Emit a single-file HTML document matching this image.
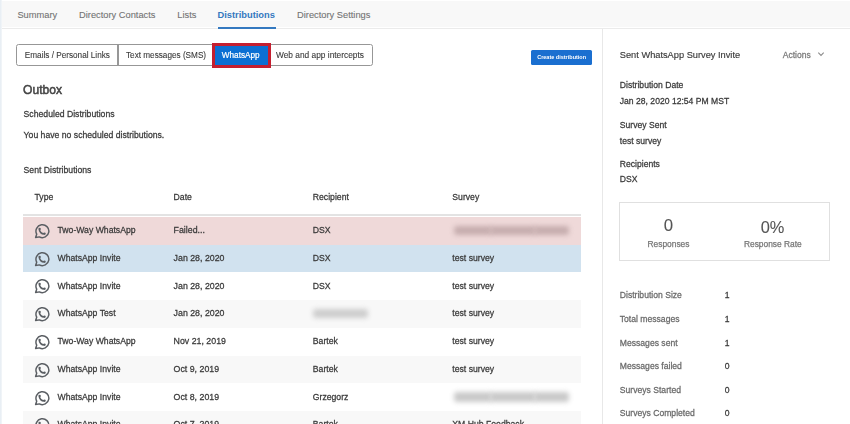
<!DOCTYPE html>
<html><head><meta charset="utf-8"><style>
html,body{margin:0;padding:0;}
body{width:850px;height:424px;overflow:hidden;position:relative;background:#fff;font-family:"Liberation Sans",sans-serif;}
.t{position:absolute;white-space:nowrap;transform-origin:0 84.65%;transform:scaleY(1.13);}
.r{position:absolute;}
.ic{position:absolute;}
#w{position:absolute;left:0;top:0;width:850px;height:424px;overflow:hidden;filter:blur(0.35px);}
</style></head><body><div id="w">
<div class="r" style="left:0px;top:0px;width:2px;height:424px;background:linear-gradient(90deg,#e6edf3,#f3f6f9);"></div>
<div class="r" style="left:2px;top:1.2px;width:848px;height:26.3px;background:#f8f8f8;"></div>
<div class="r" style="left:2px;top:27.5px;width:848px;height:1.3px;background:#ebebeb;"></div>
<div class="t" style="left:17.40px;top:10.83px;font-size:9.3px;line-height:9.3px;color:#737373;-webkit-text-stroke:0.1px #737373;transform:scaleY(1.06);">Summary</div>
<div class="t" style="left:79.00px;top:10.83px;font-size:9.3px;line-height:9.3px;color:#737373;-webkit-text-stroke:0.1px #737373;transform:scaleY(1.06);">Directory Contacts</div>
<div class="t" style="left:177.30px;top:10.83px;font-size:9.3px;line-height:9.3px;color:#737373;-webkit-text-stroke:0.1px #737373;transform:scaleY(1.06);">Lists</div>
<div class="t" style="left:217.50px;top:10.81px;font-size:9.32px;line-height:9.32px;color:#3479c0;font-weight:700;transform:scaleY(1.06);">Distributions</div>
<div class="r" style="left:218px;top:27px;width:57.5px;height:2px;background:#3479c0;"></div>
<div class="t" style="left:297.00px;top:10.83px;font-size:9.3px;line-height:9.3px;color:#737373;-webkit-text-stroke:0.1px #737373;transform:scaleY(1.06);">Directory Settings</div>
<div class="r" style="left:16px;top:44.3px;width:356.8px;height:21.8px;border:1.5px solid #979797;border-radius:2.5px;box-sizing:border-box;background:#fff"></div>
<div class="r" style="left:117.4px;top:45px;width:1.3px;height:21px;background:#979797;"></div>
<div class="t" style="left:24.80px;top:51.56px;font-size:8.2px;line-height:8.2px;color:#3a3a3a;-webkit-text-stroke:0.1px #3a3a3a;">Emails / Personal Links</div>
<div class="t" style="left:126.00px;top:51.56px;font-size:8.2px;line-height:8.2px;color:#3a3a3a;-webkit-text-stroke:0.1px #3a3a3a;">Text messages (SMS)</div>
<div class="r" style="left:212.2px;top:43px;width:58.6px;height:24.7px;background:#0b6fd3;border:3px solid #c41f30;box-sizing:border-box"></div>
<div class="t" style="left:221.80px;top:51.56px;font-size:8.2px;line-height:8.2px;color:#fff;-webkit-text-stroke:0.2px #fff;">WhatsApp</div>
<div class="t" style="left:276.00px;top:51.43px;font-size:8.35px;line-height:8.35px;color:#3a3a3a;-webkit-text-stroke:0.1px #3a3a3a;">Web and app intercepts</div>
<div class="r" style="left:531px;top:49.5px;width:61px;height:15.5px;background:#1a6fd0;border-radius:1.5px"></div>
<div class="t" style="left:537.20px;top:55.04px;font-size:5.5px;line-height:5.5px;color:#fff;font-weight:700;">Create distribution</div>
<div class="t" style="left:23.10px;top:84.46px;font-size:12.1px;line-height:12.1px;color:#444;-webkit-text-stroke:0.5px #444;">Outbox</div>
<div class="t" style="left:23.60px;top:109.67px;font-size:8.66px;line-height:8.66px;color:#3a3a3a;-webkit-text-stroke:0.25px #3a3a3a;">Scheduled Distributions</div>
<div class="t" style="left:23.60px;top:131.37px;font-size:8.66px;line-height:8.66px;color:#3a3a3a;-webkit-text-stroke:0.25px #3a3a3a;">You have no scheduled distributions.</div>
<div class="t" style="left:23.60px;top:166.27px;font-size:8.66px;line-height:8.66px;color:#3a3a3a;-webkit-text-stroke:0.25px #3a3a3a;">Sent Distributions</div>
<div class="t" style="left:34.50px;top:193.27px;font-size:8.66px;line-height:8.66px;color:#3a3a3a;-webkit-text-stroke:0.25px #3a3a3a;">Type</div>
<div class="t" style="left:173.60px;top:193.27px;font-size:8.66px;line-height:8.66px;color:#3a3a3a;-webkit-text-stroke:0.25px #3a3a3a;">Date</div>
<div class="t" style="left:312.80px;top:193.27px;font-size:8.66px;line-height:8.66px;color:#3a3a3a;-webkit-text-stroke:0.25px #3a3a3a;">Recipient</div>
<div class="t" style="left:452.30px;top:193.27px;font-size:8.66px;line-height:8.66px;color:#3a3a3a;-webkit-text-stroke:0.25px #3a3a3a;">Survey</div>
<div class="r" style="left:23.2px;top:214px;width:558px;height:2.2px;background:#e3e3e3;"></div>
<div class="r" style="left:23.2px;top:216.85px;width:558px;height:27.76px;background:#efd9d9;"></div>
<svg class="ic" style="left:34.1px;top:222.95px" width="16" height="16" viewBox="0 0 16 16"><path d="M2.7 11.2 L1.6 14.5 L5.4 13.9 A6.45 6.45 0 1 0 2.7 11.2 Z" fill="none" stroke="#5a5e63" stroke-width="1.45" stroke-linejoin="round"/><path d="M5.4 5.9 C5.2 8.9 7.6 11.2 10.6 10.9" fill="none" stroke="#5a5e63" stroke-width="1.7" stroke-linecap="round"/><circle cx="5.7" cy="5.9" r="1.05" fill="#5a5e63"/><circle cx="10.6" cy="10.6" r="1.05" fill="#5a5e63"/></svg>
<div class="t" style="left:57.50px;top:226.12px;font-size:8.66px;line-height:8.66px;color:#3a3a3a;-webkit-text-stroke:0.25px #3a3a3a;">Two-Way WhatsApp</div>
<div class="t" style="left:173.60px;top:226.00px;font-size:8.8px;line-height:8.8px;color:#3a3a3a;-webkit-text-stroke:0.25px #3a3a3a;">Failed...</div>
<div class="t" style="left:312.80px;top:226.12px;font-size:8.66px;line-height:8.66px;color:#3a3a3a;-webkit-text-stroke:0.25px #3a3a3a;">DSX</div>
<div class="r" style="left:23.2px;top:244.61px;width:558px;height:27.76px;background:#d1e2ef;"></div>
<svg class="ic" style="left:34.1px;top:250.71px" width="16" height="16" viewBox="0 0 16 16"><path d="M2.7 11.2 L1.6 14.5 L5.4 13.9 A6.45 6.45 0 1 0 2.7 11.2 Z" fill="none" stroke="#5a5e63" stroke-width="1.45" stroke-linejoin="round"/><path d="M5.4 5.9 C5.2 8.9 7.6 11.2 10.6 10.9" fill="none" stroke="#5a5e63" stroke-width="1.7" stroke-linecap="round"/><circle cx="5.7" cy="5.9" r="1.05" fill="#5a5e63"/><circle cx="10.6" cy="10.6" r="1.05" fill="#5a5e63"/></svg>
<div class="t" style="left:57.50px;top:253.88px;font-size:8.66px;line-height:8.66px;color:#3a3a3a;-webkit-text-stroke:0.25px #3a3a3a;">WhatsApp Invite</div>
<div class="t" style="left:173.60px;top:253.76px;font-size:8.8px;line-height:8.8px;color:#3a3a3a;-webkit-text-stroke:0.25px #3a3a3a;">Jan 28, 2020</div>
<div class="t" style="left:312.80px;top:253.88px;font-size:8.66px;line-height:8.66px;color:#3a3a3a;-webkit-text-stroke:0.25px #3a3a3a;">DSX</div>
<div class="t" style="left:452.30px;top:253.88px;font-size:8.66px;line-height:8.66px;color:#3a3a3a;-webkit-text-stroke:0.25px #3a3a3a;">test survey</div>
<div class="r" style="left:23.2px;top:272.37px;width:558px;height:27.76px;background:#ffffff;"></div>
<svg class="ic" style="left:34.1px;top:278.47px" width="16" height="16" viewBox="0 0 16 16"><path d="M2.7 11.2 L1.6 14.5 L5.4 13.9 A6.45 6.45 0 1 0 2.7 11.2 Z" fill="none" stroke="#5a5e63" stroke-width="1.45" stroke-linejoin="round"/><path d="M5.4 5.9 C5.2 8.9 7.6 11.2 10.6 10.9" fill="none" stroke="#5a5e63" stroke-width="1.7" stroke-linecap="round"/><circle cx="5.7" cy="5.9" r="1.05" fill="#5a5e63"/><circle cx="10.6" cy="10.6" r="1.05" fill="#5a5e63"/></svg>
<div class="t" style="left:57.50px;top:281.64px;font-size:8.66px;line-height:8.66px;color:#3a3a3a;-webkit-text-stroke:0.25px #3a3a3a;">WhatsApp Invite</div>
<div class="t" style="left:173.60px;top:281.52px;font-size:8.8px;line-height:8.8px;color:#3a3a3a;-webkit-text-stroke:0.25px #3a3a3a;">Jan 28, 2020</div>
<div class="t" style="left:312.80px;top:281.64px;font-size:8.66px;line-height:8.66px;color:#3a3a3a;-webkit-text-stroke:0.25px #3a3a3a;">DSX</div>
<div class="t" style="left:452.30px;top:281.64px;font-size:8.66px;line-height:8.66px;color:#3a3a3a;-webkit-text-stroke:0.25px #3a3a3a;">test survey</div>
<div class="r" style="left:23.2px;top:300.13px;width:558px;height:27.76px;background:#f8f8f8;"></div>
<svg class="ic" style="left:34.1px;top:306.23px" width="16" height="16" viewBox="0 0 16 16"><path d="M2.7 11.2 L1.6 14.5 L5.4 13.9 A6.45 6.45 0 1 0 2.7 11.2 Z" fill="none" stroke="#5a5e63" stroke-width="1.45" stroke-linejoin="round"/><path d="M5.4 5.9 C5.2 8.9 7.6 11.2 10.6 10.9" fill="none" stroke="#5a5e63" stroke-width="1.7" stroke-linecap="round"/><circle cx="5.7" cy="5.9" r="1.05" fill="#5a5e63"/><circle cx="10.6" cy="10.6" r="1.05" fill="#5a5e63"/></svg>
<div class="t" style="left:57.50px;top:309.40px;font-size:8.66px;line-height:8.66px;color:#3a3a3a;-webkit-text-stroke:0.25px #3a3a3a;">WhatsApp Test</div>
<div class="t" style="left:173.60px;top:309.28px;font-size:8.8px;line-height:8.8px;color:#3a3a3a;-webkit-text-stroke:0.25px #3a3a3a;">Jan 28, 2020</div>
<div class="t" style="left:452.30px;top:309.40px;font-size:8.66px;line-height:8.66px;color:#3a3a3a;-webkit-text-stroke:0.25px #3a3a3a;">test survey</div>
<div class="r" style="left:23.2px;top:327.89px;width:558px;height:27.76px;background:#ffffff;"></div>
<svg class="ic" style="left:34.1px;top:333.99px" width="16" height="16" viewBox="0 0 16 16"><path d="M2.7 11.2 L1.6 14.5 L5.4 13.9 A6.45 6.45 0 1 0 2.7 11.2 Z" fill="none" stroke="#5a5e63" stroke-width="1.45" stroke-linejoin="round"/><path d="M5.4 5.9 C5.2 8.9 7.6 11.2 10.6 10.9" fill="none" stroke="#5a5e63" stroke-width="1.7" stroke-linecap="round"/><circle cx="5.7" cy="5.9" r="1.05" fill="#5a5e63"/><circle cx="10.6" cy="10.6" r="1.05" fill="#5a5e63"/></svg>
<div class="t" style="left:57.50px;top:337.16px;font-size:8.66px;line-height:8.66px;color:#3a3a3a;-webkit-text-stroke:0.25px #3a3a3a;">Two-Way WhatsApp</div>
<div class="t" style="left:173.60px;top:337.04px;font-size:8.8px;line-height:8.8px;color:#3a3a3a;-webkit-text-stroke:0.25px #3a3a3a;">Nov 21, 2019</div>
<div class="t" style="left:312.80px;top:337.16px;font-size:8.66px;line-height:8.66px;color:#3a3a3a;-webkit-text-stroke:0.25px #3a3a3a;">Bartek</div>
<div class="t" style="left:452.30px;top:337.16px;font-size:8.66px;line-height:8.66px;color:#3a3a3a;-webkit-text-stroke:0.25px #3a3a3a;">test survey</div>
<div class="r" style="left:23.2px;top:355.65px;width:558px;height:27.76px;background:#f8f8f8;"></div>
<svg class="ic" style="left:34.1px;top:361.75px" width="16" height="16" viewBox="0 0 16 16"><path d="M2.7 11.2 L1.6 14.5 L5.4 13.9 A6.45 6.45 0 1 0 2.7 11.2 Z" fill="none" stroke="#5a5e63" stroke-width="1.45" stroke-linejoin="round"/><path d="M5.4 5.9 C5.2 8.9 7.6 11.2 10.6 10.9" fill="none" stroke="#5a5e63" stroke-width="1.7" stroke-linecap="round"/><circle cx="5.7" cy="5.9" r="1.05" fill="#5a5e63"/><circle cx="10.6" cy="10.6" r="1.05" fill="#5a5e63"/></svg>
<div class="t" style="left:57.50px;top:364.92px;font-size:8.66px;line-height:8.66px;color:#3a3a3a;-webkit-text-stroke:0.25px #3a3a3a;">WhatsApp Invite</div>
<div class="t" style="left:173.60px;top:364.80px;font-size:8.8px;line-height:8.8px;color:#3a3a3a;-webkit-text-stroke:0.25px #3a3a3a;">Oct 9, 2019</div>
<div class="t" style="left:312.80px;top:364.92px;font-size:8.66px;line-height:8.66px;color:#3a3a3a;-webkit-text-stroke:0.25px #3a3a3a;">Bartek</div>
<div class="t" style="left:452.30px;top:364.92px;font-size:8.66px;line-height:8.66px;color:#3a3a3a;-webkit-text-stroke:0.25px #3a3a3a;">test survey</div>
<div class="r" style="left:23.2px;top:383.41px;width:558px;height:27.76px;background:#ffffff;"></div>
<svg class="ic" style="left:34.1px;top:389.51px" width="16" height="16" viewBox="0 0 16 16"><path d="M2.7 11.2 L1.6 14.5 L5.4 13.9 A6.45 6.45 0 1 0 2.7 11.2 Z" fill="none" stroke="#5a5e63" stroke-width="1.45" stroke-linejoin="round"/><path d="M5.4 5.9 C5.2 8.9 7.6 11.2 10.6 10.9" fill="none" stroke="#5a5e63" stroke-width="1.7" stroke-linecap="round"/><circle cx="5.7" cy="5.9" r="1.05" fill="#5a5e63"/><circle cx="10.6" cy="10.6" r="1.05" fill="#5a5e63"/></svg>
<div class="t" style="left:57.50px;top:392.68px;font-size:8.66px;line-height:8.66px;color:#3a3a3a;-webkit-text-stroke:0.25px #3a3a3a;">WhatsApp Invite</div>
<div class="t" style="left:173.60px;top:392.56px;font-size:8.8px;line-height:8.8px;color:#3a3a3a;-webkit-text-stroke:0.25px #3a3a3a;">Oct 8, 2019</div>
<div class="t" style="left:312.80px;top:392.68px;font-size:8.66px;line-height:8.66px;color:#3a3a3a;-webkit-text-stroke:0.25px #3a3a3a;">Grzegorz</div>
<div class="r" style="left:23.2px;top:411.17px;width:558px;height:27.76px;background:#f8f8f8;"></div>
<svg class="ic" style="left:34.1px;top:417.27px" width="16" height="16" viewBox="0 0 16 16"><path d="M2.7 11.2 L1.6 14.5 L5.4 13.9 A6.45 6.45 0 1 0 2.7 11.2 Z" fill="none" stroke="#5a5e63" stroke-width="1.45" stroke-linejoin="round"/><path d="M5.4 5.9 C5.2 8.9 7.6 11.2 10.6 10.9" fill="none" stroke="#5a5e63" stroke-width="1.7" stroke-linecap="round"/><circle cx="5.7" cy="5.9" r="1.05" fill="#5a5e63"/><circle cx="10.6" cy="10.6" r="1.05" fill="#5a5e63"/></svg>
<div class="t" style="left:57.50px;top:420.44px;font-size:8.66px;line-height:8.66px;color:#3a3a3a;-webkit-text-stroke:0.25px #3a3a3a;">WhatsApp Invite</div>
<div class="t" style="left:173.60px;top:420.32px;font-size:8.8px;line-height:8.8px;color:#3a3a3a;-webkit-text-stroke:0.25px #3a3a3a;">Oct 7, 2019</div>
<div class="t" style="left:312.80px;top:420.44px;font-size:8.66px;line-height:8.66px;color:#3a3a3a;-webkit-text-stroke:0.25px #3a3a3a;">Bartek</div>
<div class="t" style="left:452.30px;top:420.44px;font-size:8.66px;line-height:8.66px;color:#3a3a3a;-webkit-text-stroke:0.25px #3a3a3a;">XM Hub Feedback</div>
<div class="r" style="left:454px;top:225.85px;width:38px;height:9.5px;background:#c6adae;filter:blur(2.6px);border-radius:3px"></div>
<div class="r" style="left:490px;top:225.85px;width:46px;height:9.5px;background:#c6adae;filter:blur(2.6px);border-radius:3px"></div>
<div class="r" style="left:534px;top:225.85px;width:35px;height:9.5px;background:#c6adae;filter:blur(2.6px);border-radius:3px"></div>
<div class="r" style="left:313px;top:308.83px;width:55px;height:9.5px;background:#cdcdcd;filter:blur(2.6px);border-radius:3px"></div>
<div class="r" style="left:454px;top:392.40999999999997px;width:38px;height:9.5px;background:#c9c9c9;filter:blur(2.6px);border-radius:3px"></div>
<div class="r" style="left:490px;top:392.40999999999997px;width:46px;height:9.5px;background:#c9c9c9;filter:blur(2.6px);border-radius:3px"></div>
<div class="r" style="left:534px;top:392.40999999999997px;width:35px;height:9.5px;background:#c9c9c9;filter:blur(2.6px);border-radius:3px"></div>
<div class="r" style="left:602px;top:29px;width:1.2px;height:395px;background:#e8e8e8;"></div>
<div class="t" style="left:619.80px;top:50.76px;font-size:9.26px;line-height:9.26px;color:#3a3a3a;-webkit-text-stroke:0.15px #3a3a3a;transform:none;">Sent WhatsApp Survey Invite</div>
<div class="t" style="left:782.80px;top:50.57px;font-size:8.54px;line-height:8.54px;color:#7a7a7a;-webkit-text-stroke:0.25px #7a7a7a;">Actions</div>
<svg class="ic" style="left:817px;top:51px" width="8" height="6" viewBox="0 0 8 6"><path d="M1.3 1.6 L4 4.4 L6.7 1.6" fill="none" stroke="#8a8a8a" stroke-width="1.05"/></svg>
<div class="t" style="left:619.80px;top:81.42px;font-size:8.6px;line-height:8.6px;color:#3a3a3a;-webkit-text-stroke:0.25px #3a3a3a;">Distribution Date</div>
<div class="t" style="left:619.80px;top:97.22px;font-size:8.6px;line-height:8.6px;color:#3a3a3a;-webkit-text-stroke:0.25px #3a3a3a;">Jan 28, 2020 12:54 PM MST</div>
<div class="t" style="left:619.80px;top:121.02px;font-size:8.6px;line-height:8.6px;color:#3a3a3a;-webkit-text-stroke:0.25px #3a3a3a;">Survey Sent</div>
<div class="t" style="left:619.80px;top:136.72px;font-size:8.6px;line-height:8.6px;color:#3a3a3a;-webkit-text-stroke:0.25px #3a3a3a;">test survey</div>
<div class="t" style="left:619.80px;top:159.92px;font-size:8.6px;line-height:8.6px;color:#3a3a3a;-webkit-text-stroke:0.25px #3a3a3a;">Recipients</div>
<div class="t" style="left:619.80px;top:175.32px;font-size:8.6px;line-height:8.6px;color:#3a3a3a;-webkit-text-stroke:0.25px #3a3a3a;">DSX</div>
<div class="r" style="left:619.4px;top:202.3px;width:210.5px;height:59px;border:1.7px solid #e0e0e0;box-sizing:border-box"></div>
<div class="t" style="left:668.50px;top:218.38px;font-size:16.8px;line-height:16.8px;color:#555;-webkit-text-stroke:0.1px #555;transform:translateX(-50%);">0</div>
<div class="t" style="left:772.50px;top:218.52px;font-size:16.4px;line-height:16.4px;color:#555;-webkit-text-stroke:0.1px #555;transform:translateX(-50%);">0%</div>
<div class="t" style="left:668.50px;top:239.89px;font-size:8.4px;line-height:8.4px;color:#777;-webkit-text-stroke:0.25px #777;transform:translateX(-50%);">Responses</div>
<div class="t" style="left:772.80px;top:239.89px;font-size:8.4px;line-height:8.4px;color:#777;-webkit-text-stroke:0.25px #777;transform:translateX(-50%);">Response Rate</div>
<div class="t" style="left:619.80px;top:291.22px;font-size:8.6px;line-height:8.6px;color:#6a6a6a;-webkit-text-stroke:0.25px #6a6a6a;">Distribution Size</div>
<div class="t" style="left:724.80px;top:291.22px;font-size:8.6px;line-height:8.6px;color:#3a3a3a;-webkit-text-stroke:0.25px #3a3a3a;">1</div>
<div class="t" style="left:619.80px;top:315.02px;font-size:8.6px;line-height:8.6px;color:#6a6a6a;-webkit-text-stroke:0.25px #6a6a6a;">Total messages</div>
<div class="t" style="left:724.80px;top:315.02px;font-size:8.6px;line-height:8.6px;color:#3a3a3a;-webkit-text-stroke:0.25px #3a3a3a;">1</div>
<div class="t" style="left:619.80px;top:338.72px;font-size:8.6px;line-height:8.6px;color:#6a6a6a;-webkit-text-stroke:0.25px #6a6a6a;">Messages sent</div>
<div class="t" style="left:724.80px;top:338.72px;font-size:8.6px;line-height:8.6px;color:#3a3a3a;-webkit-text-stroke:0.25px #3a3a3a;">1</div>
<div class="t" style="left:619.80px;top:362.32px;font-size:8.6px;line-height:8.6px;color:#6a6a6a;-webkit-text-stroke:0.25px #6a6a6a;">Messages failed</div>
<div class="t" style="left:724.80px;top:362.32px;font-size:8.6px;line-height:8.6px;color:#3a3a3a;-webkit-text-stroke:0.25px #3a3a3a;">0</div>
<div class="t" style="left:619.80px;top:385.82px;font-size:8.6px;line-height:8.6px;color:#6a6a6a;-webkit-text-stroke:0.25px #6a6a6a;">Surveys Started</div>
<div class="t" style="left:724.80px;top:385.82px;font-size:8.6px;line-height:8.6px;color:#3a3a3a;-webkit-text-stroke:0.25px #3a3a3a;">0</div>
<div class="t" style="left:619.80px;top:409.32px;font-size:8.6px;line-height:8.6px;color:#6a6a6a;-webkit-text-stroke:0.25px #6a6a6a;">Surveys Completed</div>
<div class="t" style="left:724.80px;top:409.32px;font-size:8.6px;line-height:8.6px;color:#3a3a3a;-webkit-text-stroke:0.25px #3a3a3a;">0</div>
</div></body></html>
